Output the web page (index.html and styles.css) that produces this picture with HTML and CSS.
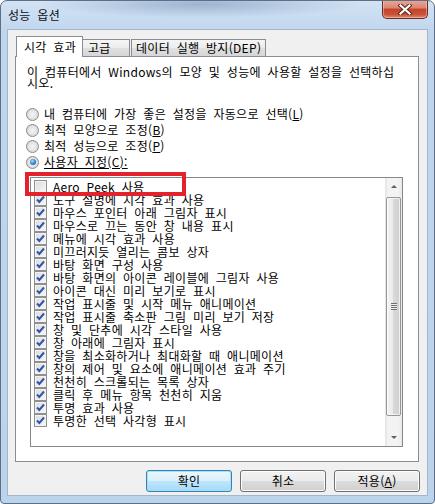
FILE: index.html
```html
<!DOCTYPE html>
<html lang="ko">
<head>
    <meta charset="UTF-8">
    <title>성능 옵션</title>
    <link rel="stylesheet" href="styles.css">
</head>
<body>

<div class="window">
    <div class="titlebar">
        <span class="title">성능 옵션</span>
        <div class="close-btn">
            <svg width="14" height="11" viewBox="0 0 14 11">
                <path d="M2.5 1.5 L11.5 9.5 M11.5 1.5 L2.5 9.5" stroke="#5b2418" stroke-width="4.2" stroke-linecap="square"/>
                <path d="M2.5 1.5 L11.5 9.5 M11.5 1.5 L2.5 9.5" stroke="#ffffff" stroke-width="2.2" stroke-linecap="square"/>
            </svg>
        </div>
    </div>

    <div class="client">
        <div class="tabs">
            <div class="tab active">시각 효과</div>
            <div class="tab second">고급</div>
            <div class="tab third">데이터 실행 방지(DEP)</div>
        </div>

        <div class="tab-page">
            <p class="intro">이 컴퓨터에서 Windows의 모양 및 성능에 사용할 설정을 선택하십<br>시오.</p>

            <div class="radios">
                <div class="radio-row"><span class="radio"></span>내 컴퓨터에 가장 좋은 설정을 자동으로 선택(<u>L</u>)</div>
                <div class="radio-row"><span class="radio"></span>최적 모양으로 조정(<u>B</u>)</div>
                <div class="radio-row"><span class="radio"></span>최적 성능으로 조정(<u>P</u>)</div>
                <div class="radio-row"><span class="radio checked"></span><span class="underline">사용자 지정(C):</span></div>
            </div>

            <div class="list-wrap">
                <div class="list">
                    <div class="items" id="items"></div>
                    <div class="scrollbar">
                        <div class="arrow up"></div>
                        <div class="thumb"><span class="grip"></span></div>
                        <div class="arrow down"></div>
                    </div>
                </div>
                <div class="highlight"></div>
            </div>
        </div>

        <div class="buttons">
            <div class="btn default">확인</div>
            <div class="btn">취소</div>
            <div class="btn">적용(<u>A</u>)</div>
        </div>
    </div>
</div>

<script>
    // Visual effect options, in the order the dialog lists them
    const effects = [
        ['Aero Peek 사용', false],
        ['도구 설명에 시각 효과 사용', true],
        ['마우스 포인터 아래 그림자 표시', true],
        ['마우스로 끄는 동안 창 내용 표시', true],
        ['메뉴에 시각 효과 사용', true],
        ['미끄러지듯 열리는 콤보 상자', true],
        ['바탕 화면 구성 사용', true],
        ['바탕 화면의 아이콘 레이블에 그림자 사용', true],
        ['아이콘 대신 미리 보기로 표시', true],
        ['작업 표시줄 및 시작 메뉴 애니메이션', true],
        ['작업 표시줄 축소판 그림 미리 보기 저장', true],
        ['창 및 단추에 시각 스타일 사용', true],
        ['창 아래에 그림자 표시', true],
        ['창을 최소화하거나 최대화할 때 애니메이션', true],
        ['창의 제어 및 요소에 애니메이션 효과 주기', true],
        ['천천히 스크롤되는 목록 상자', true],
        ['클릭 후 메뉴 항목 천천히 지움', true],
        ['투명 효과 사용', true],
        ['투명한 선택 사각형 표시', true]
    ];

    const checkSvg = '<svg width="11" height="11" viewBox="0 0 11 11">' +
        '<path d="M2 5.5 L4.3 8 L9 2.5" fill="none" stroke="#3257a8" stroke-width="2.1"/></svg>';

    const container = document.getElementById('items');
    effects.forEach(([label, checked]) => {
        const row = document.createElement('div');
        row.className = 'item';
        const box = document.createElement('span');
        box.className = 'checkbox';
        if (checked) box.innerHTML = checkSvg;
        row.appendChild(box);
        row.appendChild(document.createTextNode(label));
        container.appendChild(row);
    });
</script>

</body>
</html>
```

FILE: styles.css
```css
body {
    margin: 0;
    font-family: "Noto Sans CJK KR", "Noto Sans", sans-serif;
    font-size: 12px;
    letter-spacing: 0.3px;
    word-spacing: 3px;
    color: #000;
    background: #ffffff;
}

.window {
    width: 435px;
    height: 504px;
    box-sizing: border-box;
    border: 1px solid #5d6f86;
    border-radius: 7px 7px 4px 4px;
    background:
        radial-gradient(ellipse 160px 14px at 200px 3px, rgba(95, 125, 165, 0.45), rgba(95, 125, 165, 0)),
        linear-gradient(#d3e3f4, #c0d6ee 30px, #bcd3ec);
    overflow: hidden;
}

.titlebar {
    height: 28px;
    display: flex;
    justify-content: space-between;
    align-items: flex-start;
}

.title {
    margin: 7px 0 0 7px;
    line-height: 14px;
    color: #0c1018;
}

.close-btn {
    width: 46px;
    height: 19px;
    margin-right: 6px;
    margin-top: -1px;
    box-sizing: border-box;
    border: 1px solid #6a2c22;
    border-top: none;
    border-radius: 0 0 5px 5px;
    background: linear-gradient(#eaa898, #d98572 45%, #c6432c 50%, #c95237 80%, #e0896b);
    box-shadow: inset 0 0 0 1px rgba(255, 210, 195, 0.5);
    display: flex;
    align-items: center;
    justify-content: center;
}

.client {
    width: 421px;
    height: 467px;
    margin-left: 6px;
    box-sizing: border-box;
    border: 1px solid #a3b6cb;
    background: #f0f0f0;
}

.tabs {
    height: 21px;
    margin-top: 6px;
    margin-bottom: -1px;
    padding-left: 8px;
    display: flex;
    align-items: flex-end;
    position: relative;
    z-index: 1;
}

.tab {
    height: 17px;
    margin-bottom: 1px;
    box-sizing: border-box;
    border: 1px solid #898c95;
    border-bottom: none;
    line-height: 15px;
    white-space: nowrap;
    background: linear-gradient(#f5f5f5, #ececec 50%, #e0e0e0 50%, #d6d6d6);
}

.tab.active {
    width: 67px;
    height: 21px;
    margin-bottom: 0;
    padding-left: 7px;
    line-height: 19px;
    background: #ffffff;
}

.tab.second {
    width: 47px;
    padding-left: 5px;
    border-left: none;
}

.tab.third {
    width: 135px;
    margin-left: 1px;
    padding-left: 4px;
}

.tab-page {
    width: 404px;
    height: 406px;
    margin-left: 7px;
    box-sizing: border-box;
    border: 1px solid #898c95;
    background: #ffffff;
    padding-top: 9px;
}

.intro {
    margin: 0 0 0 11px;
    line-height: 11px;
}

.radios {
    margin-top: 18px;
    padding-left: 10px;
}

.radio-row {
    height: 16px;
    display: flex;
    align-items: center;
    line-height: 16px;
}

.radio {
    width: 13px;
    height: 13px;
    margin-right: 5px;
    box-sizing: border-box;
    border: 1px solid #8a8a8a;
    border-radius: 50%;
    background: radial-gradient(circle at 50% 50%, #f6f6f6, #e2e2e2 55%, #cdcdcd);
    display: flex;
    align-items: center;
    justify-content: center;
}

.radio.checked::after {
    content: "";
    width: 6px;
    height: 6px;
    border-radius: 50%;
    background: radial-gradient(circle at 40% 35%, #a9dcfb, #2b83cf 55%, #0d4a88);
}

.underline {
    text-decoration: underline;
}

.list-wrap {
    position: relative;
    margin: 7px 0 0 14px;
    width: 373px;
}

.list {
    height: 270px;
    box-sizing: border-box;
    border: 1px solid #828790;
    display: flex;
    background: #ffffff;
}

.items {
    flex: 1;
    padding: 2px 0 0 3px;
    overflow: hidden;
}

.item {
    height: 13px;
    display: flex;
    align-items: center;
    line-height: 13px;
    white-space: nowrap;
}

.checkbox {
    width: 13px;
    height: 13px;
    margin-right: 6px;
    box-sizing: border-box;
    border: 1px solid #8e8f8f;
    background: linear-gradient(135deg, #dcdcdc, #f7f7f7);
    box-shadow: inset 0 0 0 1px #f4f4f4;
    display: flex;
    align-items: center;
    justify-content: center;
}

.scrollbar {
    width: 17px;
    display: flex;
    flex-direction: column;
    background: linear-gradient(90deg, #e3e3e3, #f3f3f3 3px, #f3f3f3 13px, #e9e9e9);
}

.arrow {
    height: 17px;
    display: flex;
    align-items: center;
    justify-content: center;
}

.arrow.up::after {
    content: "";
    border-left: 3px solid transparent;
    border-right: 3px solid transparent;
    border-bottom: 3px solid #5e5e5e;
}

.arrow.down {
    margin-top: auto;
}

.arrow.down::after {
    content: "";
    border-left: 3px solid transparent;
    border-right: 3px solid transparent;
    border-top: 3px solid #5e5e5e;
}

.thumb {
    height: 219px;
    margin: 2px 1px 0 1px;
    box-sizing: border-box;
    border: 1px solid #979797;
    border-radius: 2px;
    background: linear-gradient(90deg, #f4f4f4, #e9e9e9 50%, #d9d9d9 50%, #cfcfcf);
    box-shadow: inset 0 0 0 1px rgba(255, 255, 255, 0.7);
    display: flex;
    align-items: center;
    justify-content: center;
}

.grip {
    width: 6px;
    height: 7px;
    background: repeating-linear-gradient(#6f6f6f 0 1px, #eeeeee 1px 2px);
}

.highlight {
    position: absolute;
    left: -5px;
    top: -5px;
    width: 161px;
    height: 24px;
    box-sizing: border-box;
    border: 4px solid #e4222b;
}

.buttons {
    margin-top: 8px;
    padding-right: 7px;
    display: flex;
    justify-content: flex-end;
    gap: 8px;
}

.btn {
    width: 86px;
    height: 22px;
    box-sizing: border-box;
    border: 1px solid #707070;
    border-radius: 3px;
    background: linear-gradient(#f2f2f2, #ebebeb 50%, #dddddd 50%, #cfcfcf);
    box-shadow: inset 0 0 0 1px #fcfcfc;
    text-align: center;
    line-height: 20px;
}

.btn.default {
    border-color: #3c7fb1;
    background: linear-gradient(#eaf6fd, #d9f0fc 50%, #bee6fd 50%, #a7d9f5);
    box-shadow: inset 0 0 0 1px #9ce4f9;
}
```
